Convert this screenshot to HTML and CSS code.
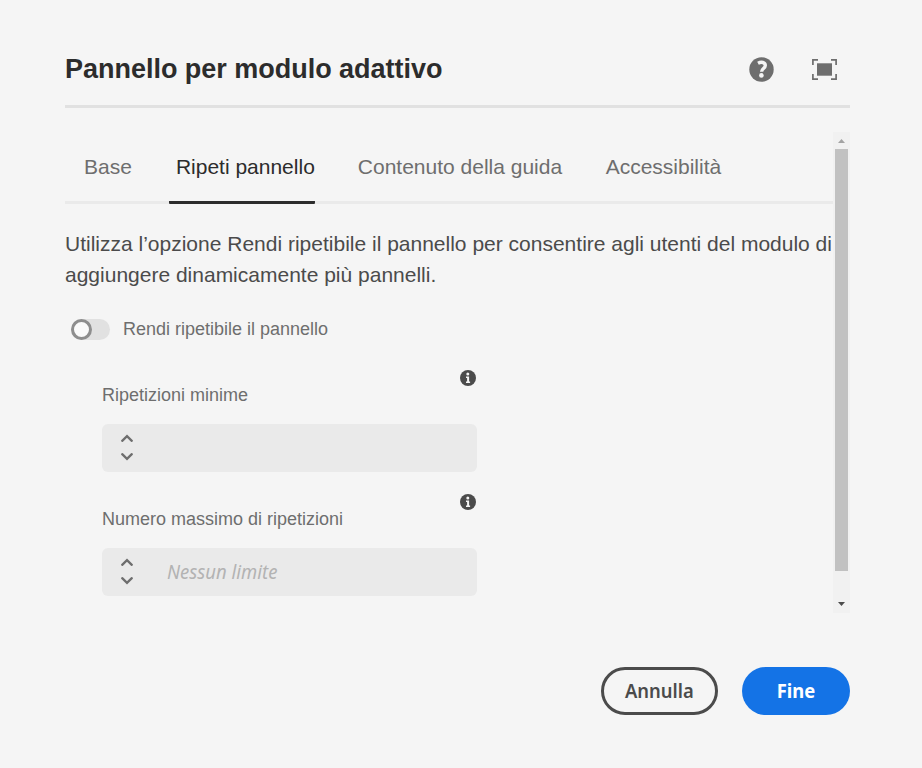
FILE: index.html
```html
<!DOCTYPE html>
<html lang="it">
<head>
<meta charset="utf-8">
<title>Pannello per modulo adattivo</title>
<link rel="stylesheet" href="styles.css">
</head>
<body>
<main class="dialog">
  <header class="header">
    <h1 class="title">Pannello per modulo adattivo</h1>
    <div class="actions">
      <svg class="help" viewBox="0 0 25 25"><circle cx="12.5" cy="12.5" r="12.2" fill="#6e6e6e"/><path d="M9 6.3C12.3 4.5 16.3 5.2 16.3 8.6C16.3 11.4 12.6 11.8 12.6 14.7" fill="none" stroke="#f5f5f5" stroke-width="3.4"/><circle cx="12.4" cy="18.4" r="2.3" fill="#f5f5f5"/></svg>
      <svg class="expand" viewBox="0 0 25 21"><path d="M6 .9H.9V6M19 .9h5.1V6M.9 15v5.1H6M24.1 15v5.1H19" fill="none" stroke="#6e6e6e" stroke-width="1.7"/><rect x="5" y="4.3" width="15" height="12.4" fill="#6e6e6e"/></svg>
    </div>
  </header>
  <div class="scroller">
    <div class="content">
      <nav class="tabs">
        <a class="tab base">Base</a>
        <a class="tab selected">Ripeti pannello</a>
        <a class="tab guide">Contenuto della guida</a>
        <a class="tab">Accessibilità</a>
      </nav>
      <p class="description">Utilizza l’opzione Rendi ripetibile il pannello per consentire agli utenti del modulo di<br>aggiungere dinamicamente più pannelli.</p>
      <label class="toggle"><span class="switch"><span class="knob"></span></span><span>Rendi ripetibile il pannello</span></label>
      <div class="field">
        <div class="field-head"><span class="label">Ripetizioni minime</span>
          <svg class="info" viewBox="0 0 16 16"><circle cx="8" cy="8" r="8" fill="#4b4b4b"/><circle cx="7.8" cy="4" r="1.5" fill="#f5f5f5"/><path d="M6 6.5h3.1v5h1v1.4H6v-1.4h1.1V7.9H6z" fill="#f5f5f5"/></svg>
        </div>
        <div class="input"><svg class="stepper" viewBox="0 0 14 28"><path d="M2.2 6.8l4.8-4.6 4.8 4.6M2.2 20.2l4.8 4.6 4.8-4.6" fill="none" stroke="#6e6e6e" stroke-width="2.3" stroke-linecap="round"/></svg></div>
      </div>
      <div class="field">
        <div class="field-head"><span class="label">Numero massimo di ripetizioni</span>
          <svg class="info" viewBox="0 0 16 16"><circle cx="8" cy="8" r="8" fill="#4b4b4b"/><circle cx="7.8" cy="4" r="1.5" fill="#f5f5f5"/><path d="M6 6.5h3.1v5h1v1.4H6v-1.4h1.1V7.9H6z" fill="#f5f5f5"/></svg>
        </div>
        <div class="input"><svg class="stepper" viewBox="0 0 14 28"><path d="M2.2 6.8l4.8-4.6 4.8 4.6M2.2 20.2l4.8 4.6 4.8-4.6" fill="none" stroke="#6e6e6e" stroke-width="2.3" stroke-linecap="round"/></svg><span class="placeholder">Nessun limite</span></div>
      </div>
    </div>
    <div class="scrollbar">
      <svg class="arrow" viewBox="0 0 7 4"><path d="M0 4L3.5 0L7 4z" fill="#a3a3a3"/></svg>
      <div class="thumb"></div>
      <svg class="arrow down" viewBox="0 0 7 4"><path d="M0 0h7L3.5 4z" fill="#4b4b4b"/></svg>
    </div>
  </div>
  <footer class="footer">
    <button class="button secondary"><span>Annulla</span></button>
    <button class="button primary"><span>Fine</span></button>
  </footer>
</main>
</body>
</html>
```
FILE: styles.css
```css
* { box-sizing: border-box; }
body { margin: 0; background: #f5f5f5; font-family: "Liberation Sans", Arial, sans-serif; overflow: hidden; }
svg { display: block; flex: none; }
.dialog { width: 785px; height: 768px; margin-left: 65px; padding-top: 32px; white-space: nowrap; }
.header { height: 76px; border-bottom: 3px solid #e1e1e1; display: flex; align-items: center; justify-content: space-between; }
.title { margin: 0; padding-top: 2px; font-size: 27px; line-height: 31px; letter-spacing: -.02px; color: #2c2c2c; }
.actions { display: flex; align-items: center; gap: 38px; padding: 2px 13px 0 0; }
.help { width: 25px; height: 25px; }
.expand { width: 25px; height: 21px; }
.scroller { height: 481px; margin-top: 24px; display: flex; }
.content { width: 768px; }
.tabs { height: 72px; display: flex; border-bottom: 3px solid #eaeaea; padding-left: 19px; }
.tab { height: 72px; padding-top: 23px; font-size: 21px; line-height: 24px; color: #6e6e6e; margin-right: 43.5px; }
.tab.base { margin-right: 37px; }
.tab.selected { padding-left: 7px; color: #2c2c2c; margin-right: 43px; background: linear-gradient(#2c2c2c, #2c2c2c) bottom / 100% 3px no-repeat; border-radius: 1px; }
.description { margin: 24px 0 0; font-size: 21px; line-height: 31px; color: #4b4b4b; }
.toggle { display: flex; align-items: center; margin: 29px 0 0 6px; height: 21px; font-size: 18px; line-height: 21px; color: #6e6e6e; }
.switch { width: 39px; height: 21px; border-radius: 11px; background: #e1e1e1; margin-right: 13px; }
.knob { display: block; width: 21px; height: 21px; border: 3px solid #8e8e8e; border-radius: 50%; background: #fafafa; }
.field { margin-left: 37px; width: 375px; padding-top: 30px; }
.field + .field { padding-top: 22px; }
.field-head { height: 54px; display: flex; justify-content: space-between; }
.label { padding-top: 15px; font-size: 18px; line-height: 21px; color: #6e6e6e; }
.info { width: 16px; height: 16px; margin: -.5px 1px 0 0; }
.input { height: 48px; border-radius: 6px; background: #eaeaea; display: flex; align-items: center; padding-left: 18px; }
.stepper { width: 14px; height: 28px; }
.placeholder { margin-left: 33px; padding-bottom: 1px; font: italic 20px/26px "Noto Sans", sans-serif; color: #b3b3b3; transform: scaleX(.925); transform-origin: left; }
.scrollbar { width: 17px; background: #f1f1f1; display: flex; flex-direction: column; align-items: center; }
.arrow { width: 7px; height: 4px; margin: 7px 0 6px; }
.thumb { width: 13px; height: 422px; background: #c1c1c1; }
.down { margin: 31px 0 0; }
.footer { margin-top: 54px; display: flex; justify-content: flex-end; gap: 24px; }
.button { height: 48px; border-radius: 24px; font: 600 20px/26px "Noto Sans", sans-serif; padding: 0 0 1px; }
.button span { display: inline-block; transform: scaleX(.92); }
.secondary { width: 117px; border: 3px solid #4b4b4b; background: transparent; color: #4b4b4b; }
.primary { width: 108px; border: 0; background: #1473e6; color: #fff; }
.primary span { font-weight: 700; }
```
